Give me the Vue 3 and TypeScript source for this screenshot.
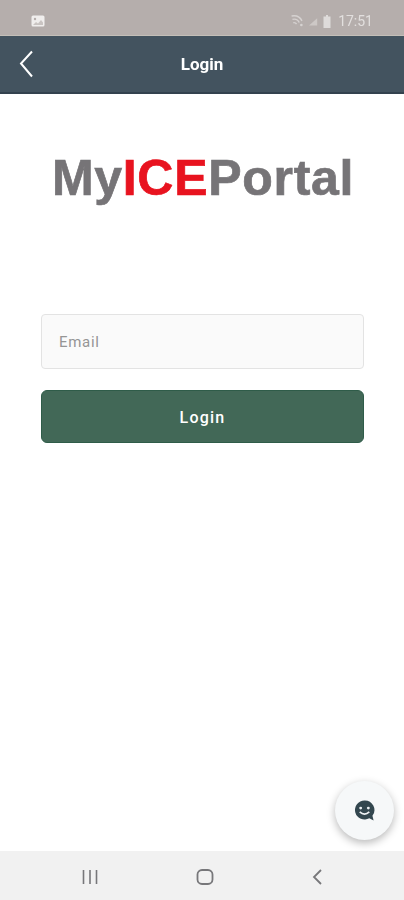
<template>
  <div class="screen">
    <div class="status-bar">
      <svg class="gallery" width="14" height="12" viewBox="0 0 14 12">
        <rect x="0.5" y="0.5" width="13" height="11" rx="1.5" fill="#f0eeed" />
        <circle cx="4" cy="4" r="1.2" fill="#b5aeac" />
        <path d="M2 10l3-3 2 1.5L10 5l2 2.5V10z" fill="#c9c4c2" />
      </svg>
      <div class="status-right">
        <svg width="15" height="13" viewBox="0 0 17 13">
          <path d="M1 3q7-5 13 0M3.500 6q4.500-3.500 8.500 0M6 9q2-1.500 4 0" fill="none" stroke="#d6d2d1" stroke-width="1.600" transform="rotate(25 8 6)" />
          <circle cx="14" cy="10.500" r="1.500" fill="#d6d2d1" />
        </svg>
        <svg width="9" height="9" viewBox="0 0 11 10"><path d="M0 10L10 1v9z" fill="#cdc8c6" /></svg>
        <svg width="8" height="13" viewBox="0 0 8 13">
          <path d="M3 0h2v1.500h2.500V13H.5V1.500H3z" fill="#dedbda" />
        </svg>
        <span class="time">17:51</span>
      </div>
    </div>

    <header class="app-bar">
      <svg class="back" width="14" height="28" viewBox="0 0 14 28">
        <path d="M13 1.500L2 13.500 13 26.500" fill="none" stroke="#fff" stroke-width="2" />
      </svg>
      <h1>Login</h1>
    </header>

    <main class="content">
      <div class="logo">My<span class="ice">ICE</span>Portal</div>
      <form class="login-form" @submit.prevent>
        <input v-model="email" type="text" placeholder="Email" />
        <button type="submit">Login</button>
      </form>
    </main>

    <button class="fab" type="button" aria-label="Chat">
      <svg width="23" height="23" viewBox="0 0 24 24">
        <path d="M12 1.500a10 10 0 1 0 5 18.700l4.500 2.300-1.200-5A10 10 0 0 0 12 1.500z" fill="#33474f" />
        <circle cx="8" cy="9.500" r="1.500" fill="#eef2f4" />
        <circle cx="16" cy="9.500" r="1.500" fill="#eef2f4" />
        <path d="M7 13.500q5 4.500 10 0" fill="none" stroke="#eef2f4" stroke-width="1.800" />
      </svg>
    </button>

    <nav class="nav-bar">
      <svg width="16" height="16" viewBox="0 0 16 16">
        <path d="M1.500 1v14M8 1v14M14.500 1v14" stroke="#77777a" stroke-width="1.600" />
      </svg>
      <svg width="18" height="18" viewBox="0 0 18 18">
        <rect x="1.500" y="2" width="15" height="14" rx="4.500" fill="none" stroke="#77777a" stroke-width="1.800" />
      </svg>
      <svg width="12" height="18" viewBox="0 0 12 18">
        <path d="M10 2L3 9l7 7" fill="none" stroke="#77777a" stroke-width="1.800" />
      </svg>
    </nav>
  </div>
</template>

<script setup lang="ts">
import { ref } from 'vue';

const email = ref('');
</script>

<style>
html,
body {
  margin: 0;
  background: #fff;
}
</style>

<style scoped>
.screen {
  position: relative;
  display: flex;
  flex-direction: column;
  width: 404px;
  height: 900px;
  overflow: hidden;
  background: #fff;
  font-family: Roboto, "Liberation Sans", sans-serif;
}

.status-bar {
  display: flex;
  align-items: center;
  justify-content: space-between;
  flex: none;
  height: 36px;
  padding: 7px 31px 0 31px;
  box-sizing: border-box;
  background: #b5aeac;
  border-bottom: 1px solid #c4bfb8;
}

.gallery {
  filter: blur(0.4px);
}

.status-right {
  display: flex;
  align-items: center;
  gap: 5px;
  filter: blur(0.5px);
}

.time {
  margin-left: 2px;
  color: #e2dfde;
  font-size: 14px;
}

.app-bar {
  position: relative;
  display: flex;
  align-items: center;
  justify-content: center;
  flex: none;
  height: 58px;
  box-sizing: border-box;
  background: #43535f;
  border-bottom: 2px solid #33424e;
}

.back {
  position: absolute;
  left: 19px;
  top: 14px;
}

.app-bar h1 {
  margin: 0;
  color: #fff;
  font-size: 17px;
  font-weight: 700;
  filter: blur(0.3px);
}

.content {
  flex: 1;
  padding: 0 40px;
}

.logo {
  margin-top: 51px;
  padding-left: 2px;
  color: #767477;
  font-family: "Liberation Sans", Arial, sans-serif;
  font-size: 50px;
  font-weight: 700;
  letter-spacing: 0.7px;
  line-height: 66px;
  text-align: center;
  white-space: nowrap;
  -webkit-text-stroke: 0.7px currentColor;
  filter: blur(0.5px);
}

.ice {
  color: #e8131f;
}

.login-form {
  display: flex;
  flex-direction: column;
  gap: 21px;
  margin-top: 103px;
  padding-left: 1px;
}

.login-form input {
  width: 100%;
  height: 55px;
  padding: 0 17px;
  box-sizing: border-box;
  border: 1px solid #e3e3e3;
  border-radius: 4px;
  outline: none;
  background: #fafafa;
  color: #333;
  font-family: inherit;
  font-size: 15px;
  letter-spacing: 0.7px;
}

.login-form input::placeholder {
  color: #959595;
}

.login-form button {
  height: 53px;
  padding-top: 2px;
  border: 1px solid #2f5c49;
  border-radius: 6px;
  background: #426857;
  color: #fff;
  font-family: inherit;
  font-size: 16px;
  font-weight: 500;
  letter-spacing: 1.2px;
}

.fab {
  position: absolute;
  left: 335px;
  top: 781px;
  display: flex;
  align-items: center;
  justify-content: center;
  width: 59px;
  height: 59px;
  padding: 0 1px 1px 0;
  border: none;
  border-radius: 50%;
  background: #f6f8f9;
  box-shadow: 0 3px 9px rgba(0, 0, 0, 0.28);
}

.nav-bar {
  display: flex;
  align-items: center;
  justify-content: space-between;
  flex: none;
  height: 49px;
  padding: 2px 81px 0 82px;
  box-sizing: border-box;
  background: #f1f1f1;
}
</style>
